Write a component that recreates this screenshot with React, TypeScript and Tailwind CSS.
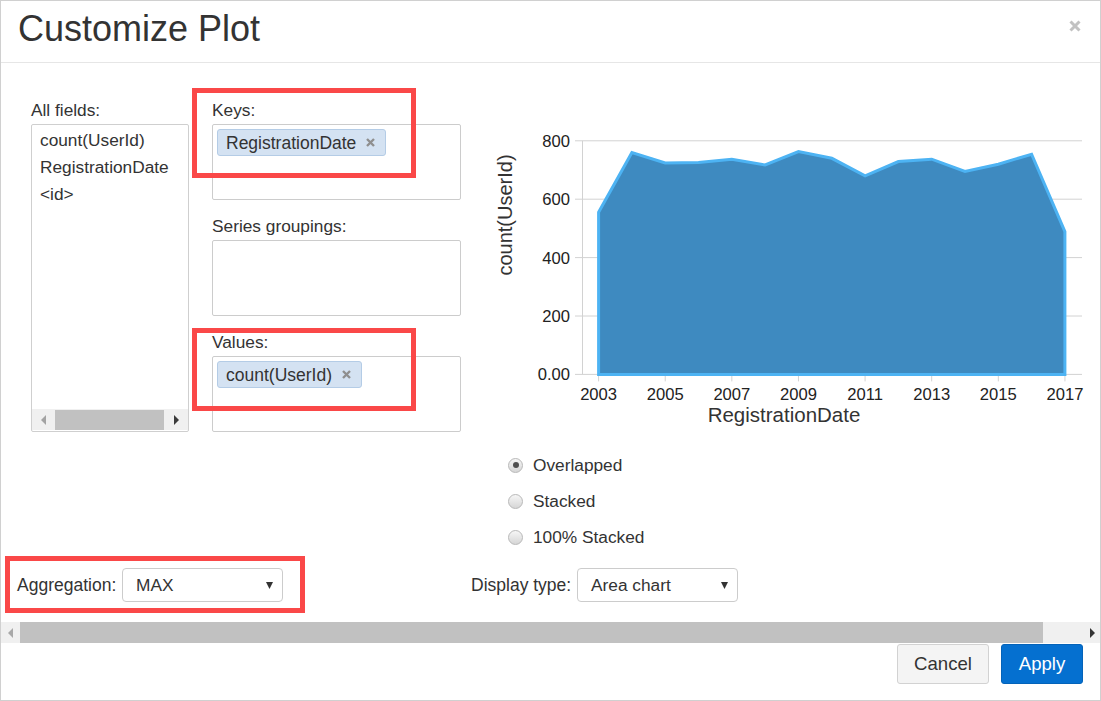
import React from "react";

const data = [555, 760, 724, 726, 737, 717, 763, 740, 680, 729, 737, 695, 720, 754, 489];

function Chart() {
  const x = (i: number) => 118.6 + i * 33.31;
  const y = (v: number) => 274.4 - v * 0.292;
  const top = data.map((v, i) => `${x(i).toFixed(1)},${y(v).toFixed(1)}`).join(" ");
  const poly = `${top} ${x(14).toFixed(1)},${y(0).toFixed(1)} ${x(0).toFixed(1)},${y(0).toFixed(1)}`;
  const yTicks = [
    { v: 800, t: "800" },
    { v: 600, t: "600" },
    { v: 400, t: "400" },
    { v: 200, t: "200" },
    { v: 0, t: "0.00" },
  ];
  const xTicks = [0, 2, 4, 6, 8, 10, 12, 14];
  return (
    <svg width="610" height="347" viewBox="0 0 610 347" className="block">
      {yTicks.map((t) => (
        <line key={t.v} x1={95} x2={602} y1={y(t.v)} y2={y(t.v)} stroke="#d2d2d2" strokeWidth={1} />
      ))}
      <line x1={102.5} x2={102.5} y1={y(800)} y2={y(0)} stroke="#d2d2d2" strokeWidth={1} />
      {xTicks.map((i) => (
        <line key={i} x1={x(i)} x2={x(i)} y1={y(0)} y2={y(0) + 7} stroke="#d2d2d2" strokeWidth={1} />
      ))}
      <polygon points={poly} fill="#3e8ac0" stroke="#4db3f3" strokeWidth={3} strokeLinejoin="miter" />
      {yTicks.map((t) => (
        <text key={t.t} x={90} y={y(t.v) + 6} textAnchor="end" fontSize={16.6} fill="#222">
          {t.t}
        </text>
      ))}
      {xTicks.map((i) => (
        <text key={i} x={x(i)} y={300} textAnchor="middle" fontSize={16.6} fill="#222">
          {2003 + i}
        </text>
      ))}
      <text x={304} y={322} textAnchor="middle" fontSize={20.5} fill="#333">
        RegistrationDate
      </text>
      <text
        x={0}
        y={0}
        transform="translate(32,115) rotate(-90)"
        textAnchor="middle"
        fontSize={20}
        fill="#333"
      >
        count(UserId)
      </text>
    </svg>
  );
}

function ChipX() {
  return (
    <svg width="9" height="9" viewBox="0 0 9 9" className="block">
      <path d="M1 1 L8 8 M8 1 L1 8" stroke="#8f8f8f" strokeWidth="2.4" strokeLinecap="butt" />
    </svg>
  );
}

function Chip({ label }: { label: string }) {
  return (
    <div className="inline-flex items-center h-[27px] pl-[8px] pr-[10px] bg-[#d4e2f2] border border-[#b4cce6] rounded-[3px] text-[17.5px] leading-[20px] text-[#333]">
      <span>{label}</span>
      <span className="ml-[10px]">
        <ChipX />
      </span>
    </div>
  );
}

function Radio({ checked, label }: { checked?: boolean; label: string }) {
  return (
    <div className="flex items-center h-[36px]">
      <div className="w-[15px] h-[15px] rounded-full border border-[#b8b8b8] bg-linear-to-b from-[#f6f6f6] to-[#d6d6d6] flex items-center justify-center">
        {checked && <div className="w-[6px] h-[6px] rounded-full bg-[#505050]" />}
      </div>
      <span className="ml-[10px] text-[17.3px] leading-[20px] text-[#333]">{label}</span>
    </div>
  );
}

function SelectArrow() {
  return (
    <svg width="7" height="7" viewBox="0 0 7 7" className="block">
      <path d="M0 0 L7 0 L3.5 7 Z" fill="#333" />
    </svg>
  );
}

function Select({ value, width }: { value: string; width: string }) {
  return (
    <div
      className={`${width} h-[34px] border border-[#cccccc] rounded-[4px] bg-white flex items-center justify-between pl-[13px] pr-[9px] text-[17.3px] leading-[20px] text-[#333]`}
    >
      <span>{value}</span>
      <SelectArrow />
    </div>
  );
}

function TriLeft({ color }: { color: string }) {
  return (
    <svg width="5" height="10" viewBox="0 0 5 10" className="block">
      <path d="M5 0 L0 5 L5 10 Z" fill={color} />
    </svg>
  );
}

function TriRight({ color }: { color: string }) {
  return (
    <svg width="5" height="10" viewBox="0 0 5 10" className="block">
      <path d="M0 0 L5 5 L0 10 Z" fill={color} />
    </svg>
  );
}

export default function App() {
  return (
    <div className="relative w-[1101px] h-[701px] border border-[#d0d0d0] bg-white flex flex-col overflow-hidden text-[#333] font-['Liberation_Sans',Arial,sans-serif]">
      {/* Header */}
      <div className="h-[62px] shrink-0 border-b border-[#e6e6e6] flex items-start justify-between pl-[17px] pr-[19px]">
        <h1 className="text-[36px] leading-[36px] pt-[10px] font-normal text-[#333]">Customize Plot</h1>
        <svg width="12" height="12" viewBox="0 0 12 12" className="block mt-[19px]">
          <path d="M1.5 1.5 L10.5 10.5 M10.5 1.5 L1.5 10.5" stroke="#c2c2c2" strokeWidth="3" />
        </svg>
      </div>

      {/* Body */}
      <div className="h-[559px] shrink-0 flex flex-col pt-[37px]">
        <div className="flex items-start pl-[30px]">
          {/* All fields */}
          <div className="w-[158px] flex flex-col">
            <div className="text-[17.3px] leading-[20px] mb-[4px]">All fields:</div>
            <div className="h-[308px] border border-[#cfcfcf] rounded-[2px] flex flex-col">
              <div className="flex-1 pt-[2px] pl-[8px] text-[17.3px] leading-[27px]">
                <div>count(UserId)</div>
                <div>RegistrationDate</div>
                <div>&lt;id&gt;</div>
              </div>
              <div className="h-[21px] mb-[1px] bg-[#f0f0f0] flex items-center">
                <div className="w-[23px] h-full flex items-center justify-center">
                  <TriLeft color="#a3a3a3" />
                </div>
                <div className="w-[109px] h-[20px] bg-[#c1c1c1]" />
                <div className="flex-1 h-full flex items-center justify-center">
                  <TriRight color="#3a3a3a" />
                </div>
              </div>
            </div>
          </div>

          {/* Keys / Series / Values */}
          <div className="ml-[23px] w-[249px] flex flex-col">
            <div className="text-[17.3px] leading-[20px] mb-[4px]">Keys:</div>
            <div className="h-[76px] border border-[#cccccc] rounded-[2px] p-[4px]">
              <Chip label="RegistrationDate" />
            </div>
            <div className="mt-[16px] text-[17.3px] leading-[20px] mb-[4px]">Series groupings:</div>
            <div className="h-[76px] border border-[#cccccc] rounded-[2px]" />
            <div className="mt-[16px] text-[17.3px] leading-[20px] mb-[4px]">Values:</div>
            <div className="h-[76px] border border-[#cccccc] rounded-[2px] p-[4px]">
              <Chip label="count(UserId)" />
            </div>
          </div>

          {/* Chart + radios */}
          <div className="ml-[19px] flex flex-col">
            <Chart />
            <div className="pl-[28px] flex flex-col">
              <Radio checked label="Overlapped" />
              <Radio label="Stacked" />
              <Radio label="100% Stacked" />
            </div>
          </div>
        </div>

        {/* Bottom row */}
        <div className="flex items-center mt-[13px] h-[34px]">
          <div className="w-[470px] pl-[16px] flex items-center">
            <span className="w-[105px] text-[17.5px] leading-[20px]">Aggregation:</span>
            <Select value="MAX" width="w-[161px]" />
          </div>
          <div className="flex items-center">
            <span className="w-[106px] text-[17.5px] leading-[20px]">Display type:</span>
            <Select value="Area chart" width="w-[161px]" />
          </div>
        </div>
      </div>

      {/* Horizontal scrollbar */}
      <div className="h-[21px] shrink-0 bg-[#f0f0f0] flex items-center">
        <div className="w-[19px] h-full flex items-center justify-center">
          <TriLeft color="#a8a8a8" />
        </div>
        <div className="w-[1023px] h-full bg-[#c1c1c1]" />
        <div className="flex-1 h-full flex items-center justify-end pr-[5px]">
          <TriRight color="#333" />
        </div>
      </div>

      {/* Footer */}
      <div className="flex-1 flex items-start justify-end pr-[17px] pt-[1px] gap-[12px]">
        <button className="w-[92px] h-[40px] bg-[#f4f4f4] border border-[#d2d2d2] rounded-[3px] text-[18.6px] text-[#333]">
          Cancel
        </button>
        <button className="w-[82px] h-[40px] bg-[#0570d0] border border-[#0463b9] rounded-[3px] text-[18.6px] text-white">
          Apply
        </button>
      </div>

      {/* Red annotation boxes */}
      <div className="absolute left-[191px] top-[87px] w-[224px] h-[90px] border-[5px] border-[#fa4848]" />
      <div className="absolute left-[191px] top-[327px] w-[224px] h-[83px] border-[5px] border-[#fa4848]" />
      <div className="absolute left-[4px] top-[555px] w-[300px] h-[57px] border-[5px] border-[#fa4848]" />
    </div>
  );
}
